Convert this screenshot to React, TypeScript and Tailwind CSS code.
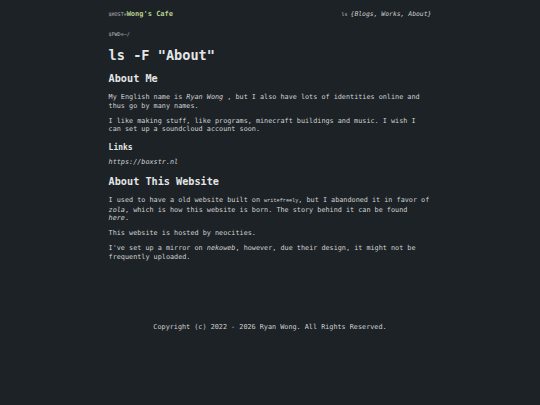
export default function App() {
  const mono = { fontFamily: '"DejaVu Sans Mono", "Liberation Mono", monospace' };
  return (
    <div className="min-h-screen bg-[#1d2226] text-[#cfd1d2]" style={mono}>
      <div className="mx-auto w-[322.8px] pt-[9px]">
        <header className="flex items-baseline justify-between">
          <div className="flex items-baseline">
            <span className="text-[5px] text-[#b9bdbf]">$HOST=</span>
            <span className="text-[7px] font-bold text-[#b7cf8f]">Wong's Cafe</span>
          </div>
          <div className="flex items-baseline gap-[3px] text-[6.4px] italic">
            <span className="text-[5px] not-italic">ls</span>
            <span>{'{'}Blogs, Works, About{'}'}</span>
          </div>
        </header>
        <div className="mt-[11px] text-[5px] text-[#b9bdbf]">$PWD=~/</div>

        <main className="text-[6.8px] leading-[8.5px]">
          <h1 className="mt-[8px] text-[13.6px] font-bold leading-[18px] text-[#e4e6e7]">ls -F "About"</h1>
          <h2 className="mt-[8px] text-[10.2px] font-bold leading-[13px] text-[#e4e6e7]">About Me</h2>
          <p className="mt-[8px]">
            My English name is <em>Ryan Wong</em> , but I also have lots of identities online and thus go by many names.
          </p>
          <p className="mt-[6.5px]">
            I like making stuff, like programs, minecraft buildings and music. I wish I can set up a soundcloud account soon.
          </p>
          <h3 className="mt-[8px] text-[8px] font-bold leading-[11px] text-[#e4e6e7]">Links</h3>
          <p className="mt-[5px] italic">https://boxstr.nl</p>
          <h2 className="mt-[9px] text-[10.2px] font-bold leading-[13px] text-[#e4e6e7]">About This Website</h2>
          <p className="mt-[8px]">
            I used to have a old website built on <code className="text-[5.2px]">writefreely</code>, but I abandoned it in favor of{' '}
            <em>zola</em>, which is how this website is born. The story behind it can be found <em>here</em>.
          </p>
          <p className="mt-[6.5px]">This website is hosted by neocities.</p>
          <p className="mt-[6.5px]">
            I've set up a mirror on <em>nekoweb</em>, however, due their design, it might not be frequently uploaded.
          </p>
        </main>

        <footer className="mt-[62px] text-center text-[6.8px] leading-[8.5px]">
          Copyright (c) 2022 - 2026 Ryan Wong. All Rights Reserved.
        </footer>
      </div>
    </div>
  );
}
